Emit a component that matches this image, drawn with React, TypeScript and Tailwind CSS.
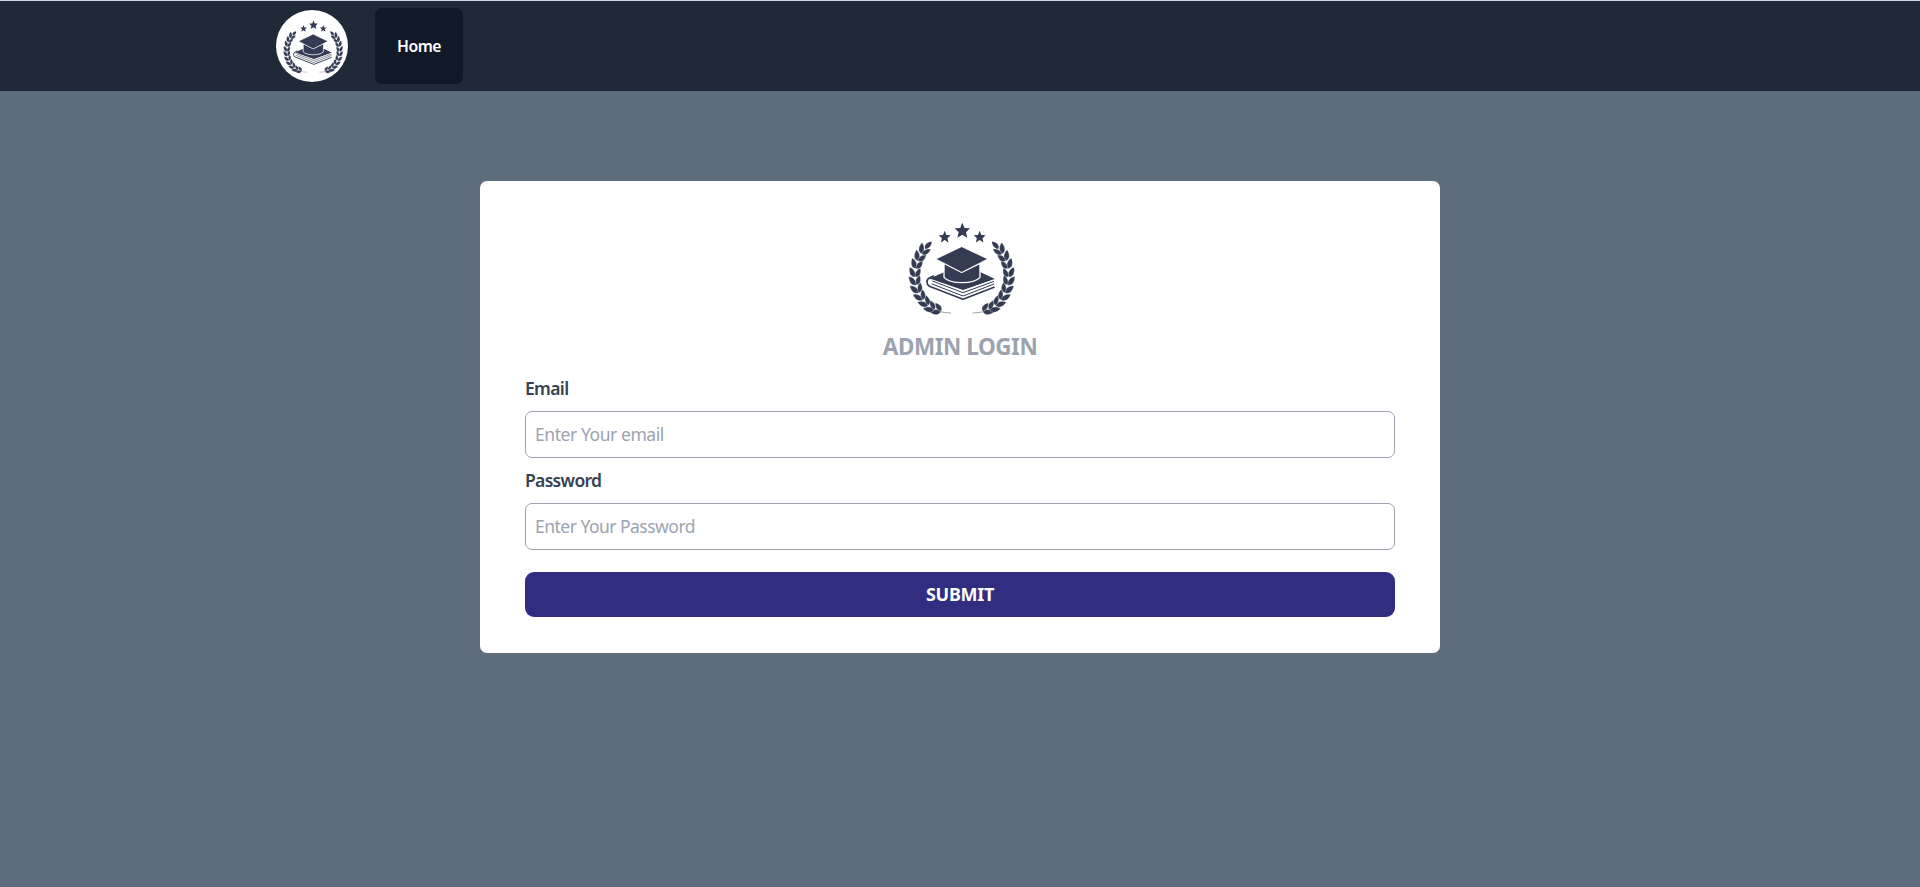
import React from 'react';

type CrestProps = { className?: string; viewBox: string };

// Stem nodes of the left laurel: x, y, direction of growth in degrees.
const nodes: [number, number, number][] = [
  [153, 304, 206],
  [133, 299, 215],
  [115, 286, 226],
  [99, 269, 237],
  [87, 248, 247],
  [79, 225, 259],
  [76, 201, 270],
  [78, 176, 281],
  [84, 153, 293],
  [95, 132, 302],
];

const leaf = 'M0 0C5 -13 18 -14 34 -4C25 7 9 8 0 0Z';

function Laurel() {
  return (
    <g>
      <g stroke="#fff" strokeWidth="1">
        {nodes.map(([x, y, a]) => (
          <g key={`${x}-${y}`}>
            <path d={leaf} transform={`translate(${x} ${y}) rotate(${a - 24})`} />
            <path d={leaf} transform={`translate(${x} ${y}) rotate(${a + 24}) scale(.9 -.9)`} />
          </g>
        ))}
      </g>
      <path d={leaf} transform="translate(106 117) rotate(-43) scale(.85)" />
      <path d="M150 305Q162 308 183 309" fill="none" stroke="#8d8f9c" strokeWidth="2.5" />
    </g>
  );
}

const star = 'M0 -24L6.5 -8L23 -7L11 5L15 21L0 12L-15 21L-11 5L-23 -7L-6.5 -8Z';

function Crest({ className, viewBox }: CrestProps) {
  return (
    <svg className={className} viewBox={viewBox} preserveAspectRatio="none" fill="#343b52" aria-hidden="true">
      <path d={star} transform="translate(217 62)" />
      <path d={star} transform="translate(164 81) scale(.77)" />
      <path d={star} transform="translate(269 81) scale(.77)" />
      <Laurel />
      <g transform="translate(431 0) scale(-1 1)">
        <Laurel />
      </g>
      <path d="M117 206L162 187L272 187L315 207L219 241Z" />
      <g fill="none" stroke="#343b52" strokeLinejoin="round" strokeLinecap="round">
        <path d="M130 198L118 204C108 209 109 223 118 229L219 268L312 232" strokeWidth="5" />
        <path d="M126 222L219 258L312 222" strokeWidth="3" />
      </g>
      <path d="M122 209L219 243L314 210" fill="none" stroke="#fff" strokeWidth="4" />
      <path d="M127 213L219 248L312 214" fill="none" stroke="#343b52" strokeWidth="3" />
      <path
        d="M162 160V202C180 223 252 223 270 202V160L215 187Z"
        stroke="#fff"
        strokeWidth="4"
        strokeLinejoin="round"
      />
      <path d="M215 110L293 147L215 187L138 147Z" stroke="#fff" strokeWidth="2" />
    </svg>
  );
}

type FieldProps = { id: string; label: string; type: string; placeholder: string; labelClass: string; inputClass: string };

function Field({ id, label, type, placeholder, labelClass, inputClass }: FieldProps) {
  return (
    <div className="mb-[9px]">
      <label htmlFor={id} className={`block h-[27px] text-[17.5px] leading-[27px] font-semibold text-gray-700 ${labelClass}`}>
        {label}
      </label>
      <input
        id={id}
        type={type}
        placeholder={placeholder}
        className={`mt-[9px] block h-[47px] w-full rounded-[7px] border border-[#9ca3af] bg-white px-[9px] pb-[2px] text-[17.5px] placeholder:text-[#9ca3af] ${inputClass}`}
      />
    </div>
  );
}

export default function App() {
  return (
    <div className="flex h-[887px] flex-col bg-[#5e6d7d] font-['Noto_Sans','Open_Sans',sans-serif]">
      <nav className="flex h-[91px] items-center border-t border-[#d1d5db] bg-[#1f2937] pl-[276px]">
        <div className="size-[72px] overflow-hidden rounded-full bg-white">
          <Crest className="size-full" viewBox="17 -16 384 376" />
        </div>
        <a
          href="#"
          className="ml-[27px] flex h-[76px] w-[88px] items-center justify-center rounded-[7px] bg-[#111827] pt-[2px] text-[15.75px] font-semibold tracking-[-0.5px] text-white"
        >
          Home
        </a>
      </nav>
      <main className="flex justify-center pt-[90px]">
        <form className="h-[472px] w-[960px] rounded-[7px] bg-white px-[45px] pt-[29px]">
          <Crest className="mx-auto block h-[120px] w-[140px]" viewBox="0 0 420 360" />
          <h1 className="mb-[12.5px] pt-[1px] text-center text-[22.5px] leading-[31.5px] font-bold tracking-[-0.45px] text-[#9ca3af]">
            ADMIN LOGIN
          </h1>
          <Field
            id="email"
            label="Email"
            type="email"
            placeholder="Enter Your email"
            labelClass="tracking-[-0.65px]"
            inputClass="tracking-[-0.43px]"
          />
          <Field
            id="password"
            label="Password"
            type="password"
            placeholder="Enter Your Password"
            labelClass="tracking-[-0.68px]"
            inputClass="tracking-[-0.52px]"
          />
          <button
            type="button"
            className="mt-[22px] block h-[45px] w-full rounded-[9px] bg-[#312e81] text-[18px] font-bold tracking-[-0.3px] text-white"
          >
            SUBMIT
          </button>
        </form>
      </main>
    </div>
  );
}
